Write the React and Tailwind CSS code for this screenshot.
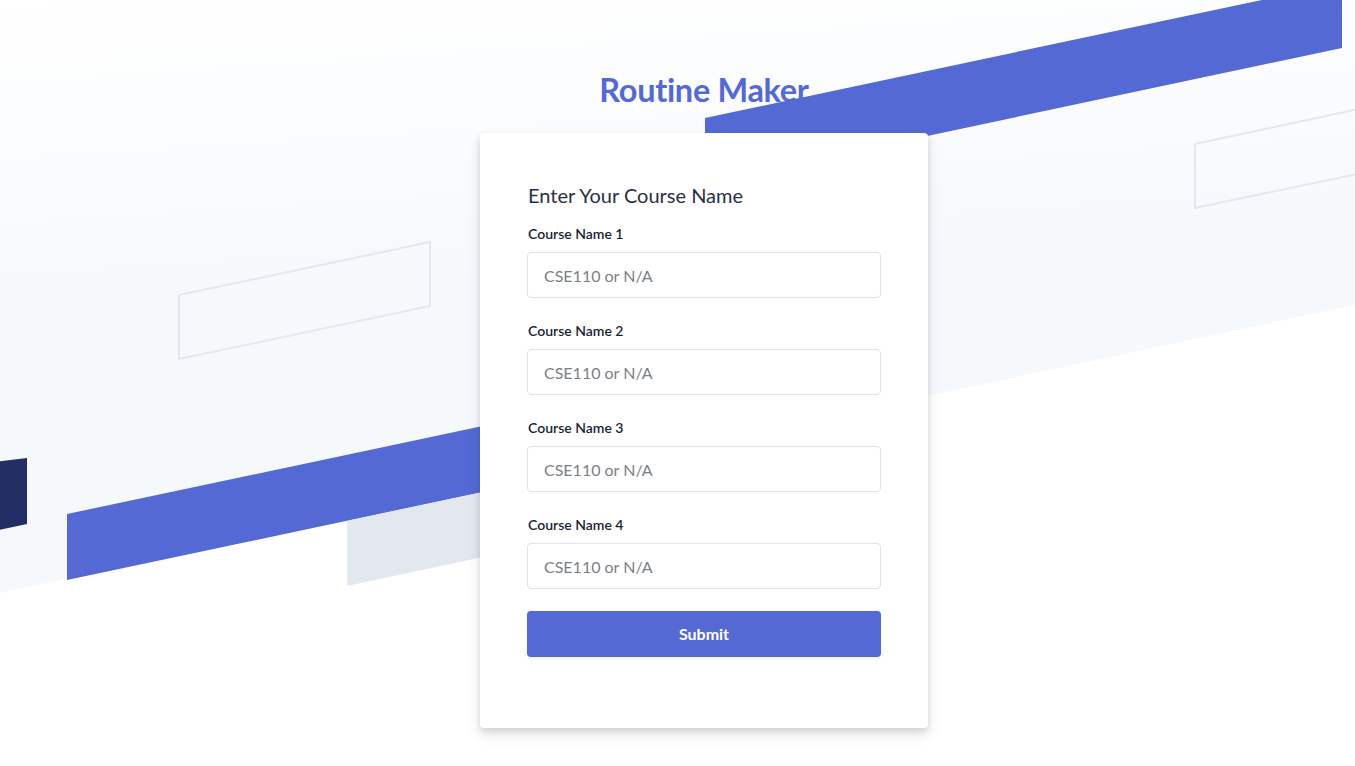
export default function App() {
  const courses = [1, 2, 3, 4];

  return (
    <div className="relative min-h-screen overflow-hidden bg-white font-['Lato',_'Noto_Sans',_sans-serif]">
      {/* skewed backdrop */}
      <svg
        className="absolute inset-0 pointer-events-none"
        width="1355"
        height="766"
        viewBox="0 0 1355 766"
      >
        <defs>
          <linearGradient id="bgfade" x1="0" y1="0" x2="0.15" y2="1">
            <stop offset="0" stopColor="#ffffff" />
            <stop offset="0.5" stopColor="#f6f9fc" />
            <stop offset="1" stopColor="#f6f9fc" />
          </linearGradient>
        </defs>
        <polygon points="0,0 1355,0 1355,305 0,593" fill="url(#bgfade)" />
        {/* top blue band */}
        <polygon points="705,118 1342,-17 1342,48 705,183" fill="#5469d4" />
        {/* outlined boxes */}
        <polygon
          points="179,295 430,242 430,306 179,359"
          fill="none"
          stroke="#e3e8ee"
          strokeWidth="2"
        />
        <polygon
          points="1195,144 1400,100 1400,165 1195,208"
          fill="none"
          stroke="#e3e8ee"
          strokeWidth="2"
        />
        {/* dark block */}
        <polygon points="-40,466 27,458 27,524 -40,538" fill="#212d63" />
        {/* bottom blue band */}
        <polygon points="67,514 700,380 700,446 67,580" fill="#5469d4" />
        {/* gray block */}
        <polygon points="347,521 700,446 700,511 347,586" fill="#e3e8ee" />
      </svg>

      <div className="relative flex flex-col items-center pt-[70px] pl-[53px]">
        <h1 className="text-[32.5px] leading-[40px] font-bold text-[#5469d4] tracking-[-0.01em]">
          Routine Maker
        </h1>

        <div className="mt-[23px] w-[448px] rounded-[4px] bg-white px-[47px] pt-12 pb-[71px] shadow-[0_7px_14px_0_rgba(60,66,87,0.12),0_3px_6px_0_rgba(0,0,0,0.12)]">
          <h2 className="pl-px text-[20px] leading-[28px] text-[#2a2f45]">
            Enter Your Course Name
          </h2>

          <form className="flex flex-col" onSubmit={(e) => e.preventDefault()}>
            {courses.map((n, i) => (
              <div key={n} className={i === 0 ? "mt-[15px]" : "mt-[23px]"}>
                <label className="block pl-px text-[14px] leading-[20px] font-semibold text-[#1a1f36]">
                  Course Name {n}
                </label>
                <input
                  type="text"
                  placeholder="CSE110 or N/A"
                  className="mt-2 block h-[46px] w-full rounded-[4px] border border-[#e0e3e8] bg-white px-4 text-[16px] text-[#1a1f36] placeholder:text-[#7a7f86] outline-none"
                />
              </div>
            ))}

            <button
              type="submit"
              className="mt-[22px] h-[46px] w-full rounded-[4px] bg-[#5469d4] text-[16px] font-bold text-white shadow-[0_1px_2px_rgba(0,0,0,0.08)]"
            >
              Submit
            </button>
          </form>
        </div>
      </div>
    </div>
  );
}
